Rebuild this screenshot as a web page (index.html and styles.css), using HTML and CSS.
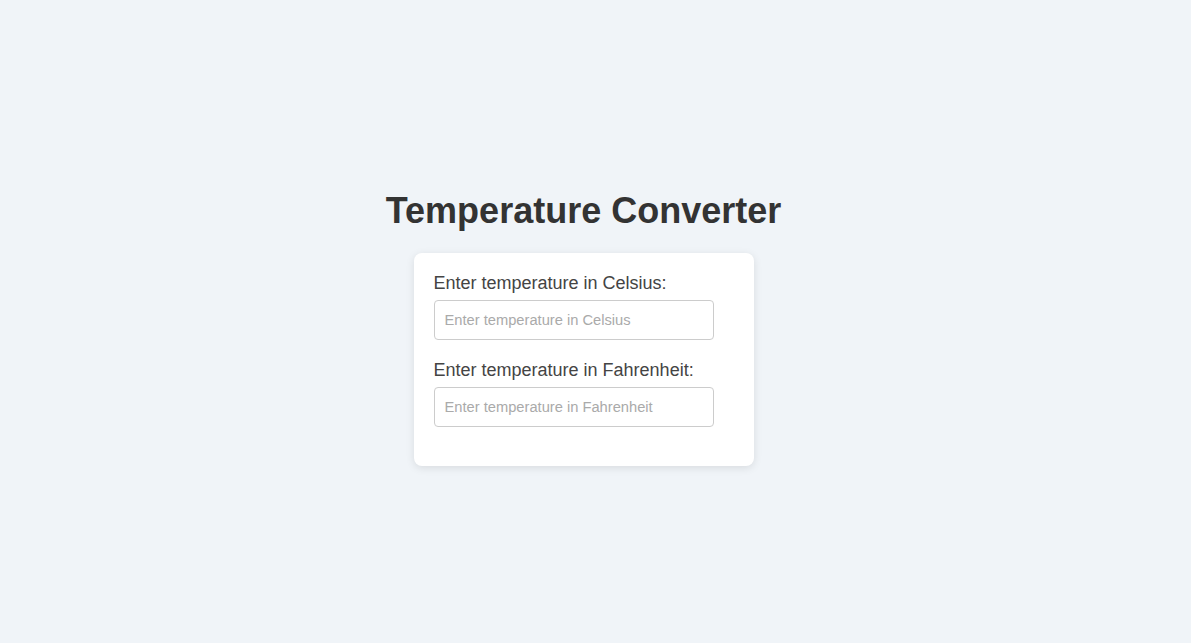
FILE: index.html
```html
<!DOCTYPE html>
<html lang="en">
<head>
<meta charset="utf-8">
<title>Temperature Converter</title>
<link rel="stylesheet" href="styles.css">
</head>
<body>
<main class="page">
  <h1 class="title">Temperature Converter</h1>
  <div class="card">
    <div class="field">
      <label class="label" for="c">Enter temperature in Celsius:</label>
      <input class="input" id="c" type="text" placeholder="Enter temperature in Celsius">
    </div>
    <div class="field">
      <label class="label" for="f">Enter temperature in Fahrenheit:</label>
      <input class="input" id="f" type="text" placeholder="Enter temperature in Fahrenheit">
    </div>
  </div>
</main>
</body>
</html>
```
FILE: styles.css
```css
html, body {
  margin: 0;
  padding: 0;
  height: 100%;
}
body {
  background: #f0f4f8;
  font-family: "Liberation Sans", Arial, sans-serif;
}
.page {
  box-sizing: border-box;
  height: 100%;
  padding: 13px 24px 0 0;
  display: flex;
  flex-direction: column;
  align-items: center;
  justify-content: center;
}
.title {
  margin: 0 0 21px;
  font-size: 36px;
  font-weight: bold;
  color: #333;
}
.card {
  background: #fff;
  width: 300px;
  padding: 20px 20px 19px;
  border-radius: 8px;
  box-shadow: 0 2px 8px rgba(0, 0, 0, 0.1);
}
.field {
  margin-bottom: 20px;
}
.label {
  display: block;
  font-size: 18px;
  color: #444;
  margin-bottom: 6px;
}
.input {
  display: block;
  box-sizing: border-box;
  width: 280px;
  height: 40px;
  padding: 10px;
  font-family: "Liberation Sans", Arial, sans-serif;
  font-size: 14.7px;
  border: 1px solid #ccc;
  border-radius: 4px;
  background: #fff;
}
.input::placeholder {
  color: #aaa;
}
```
